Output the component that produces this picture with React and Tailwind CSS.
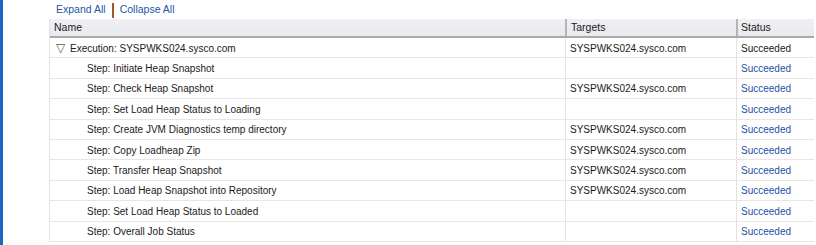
const rows = [
  { name: 'Execution: SYSPWKS024.sysco.com', target: 'SYSPWKS024.sysco.com', top: true },
  { name: 'Step: Initiate Heap Snapshot', target: '' },
  { name: 'Step: Check Heap Snapshot', target: 'SYSPWKS024.sysco.com' },
  { name: 'Step: Set Load Heap Status to Loading', target: '' },
  { name: 'Step: Create JVM Diagnostics temp directory', target: 'SYSPWKS024.sysco.com' },
  { name: 'Step: Copy Loadheap Zip', target: 'SYSPWKS024.sysco.com' },
  { name: 'Step: Transfer Heap Snapshot', target: 'SYSPWKS024.sysco.com' },
  { name: 'Step: Load Heap Snapshot into Repository', target: 'SYSPWKS024.sysco.com' },
  { name: 'Step: Set Load Heap Status to Loaded', target: '' },
  { name: 'Step: Overall Job Status', target: '' },
]

export default function App() {
  return (
    <div className="flex w-[816px] h-[245px] bg-white overflow-hidden text-[10px] text-[#1a1a1a] font-['Tahoma','Liberation_Sans',sans-serif]">
      <div className="w-[3px] bg-[#1a68c4]" />
      <div className="ml-[46px] flex-1 flex flex-col">
        {/* toolbar */}
        <div className="h-[19px] flex items-center pl-[7px] pt-[1px] text-[#2456a6] text-[10.5px]">
          <span>Expand All</span>
          <span className="mx-[6px] w-[2px] h-[15px] bg-[#a05a28]" />
          <span>Collapse All</span>
        </div>

        <div className="w-[765px] border-l border-[#e3e3e3]">
          {/* header */}
          <div className="flex h-[19px] bg-gradient-to-b from-[#f0f0f4] to-[#e9eaee] border-b-2 border-[#a9a9a9] text-[10.5px]">
            <div className="w-[515px] pl-[4px] pt-[1px] flex items-center">Name</div>
            <div className="w-[171px] pl-[4px] pt-[1px] flex items-center border-l-2 border-[#b5b5b5]">Targets</div>
            <div className="flex-1 pl-[3px] pt-[1px] flex items-center border-l-2 border-[#b5b5b5]">Status</div>
          </div>

          {rows.map((r, i) => (
            <div key={i} className="flex h-[20.4px] border-b border-[#e6e6e6]">
              <div className="w-[515px] flex items-center pt-[1px]">
                {r.top ? (
                  <>
                    <span className="ml-[6px] w-[14px] text-[#555] text-[12px] leading-none">▽</span>
                    <span>{r.name}</span>
                  </>
                ) : (
                  <span className="ml-[37px]">{r.name}</span>
                )}
              </div>
              <div className="w-[171px] pl-[4px] pt-[1px] flex items-center border-l border-[#e3e3e3]">{r.target}</div>
              <div
                className={`flex-1 pl-[4px] pt-[1px] flex items-center border-l border-[#e3e3e3] ${
                  r.top ? 'text-[#1a1a1a]' : 'text-[#2450a6]'
                }`}
              >
                Succeeded
              </div>
            </div>
          ))}
        </div>
      </div>
    </div>
  )
}
